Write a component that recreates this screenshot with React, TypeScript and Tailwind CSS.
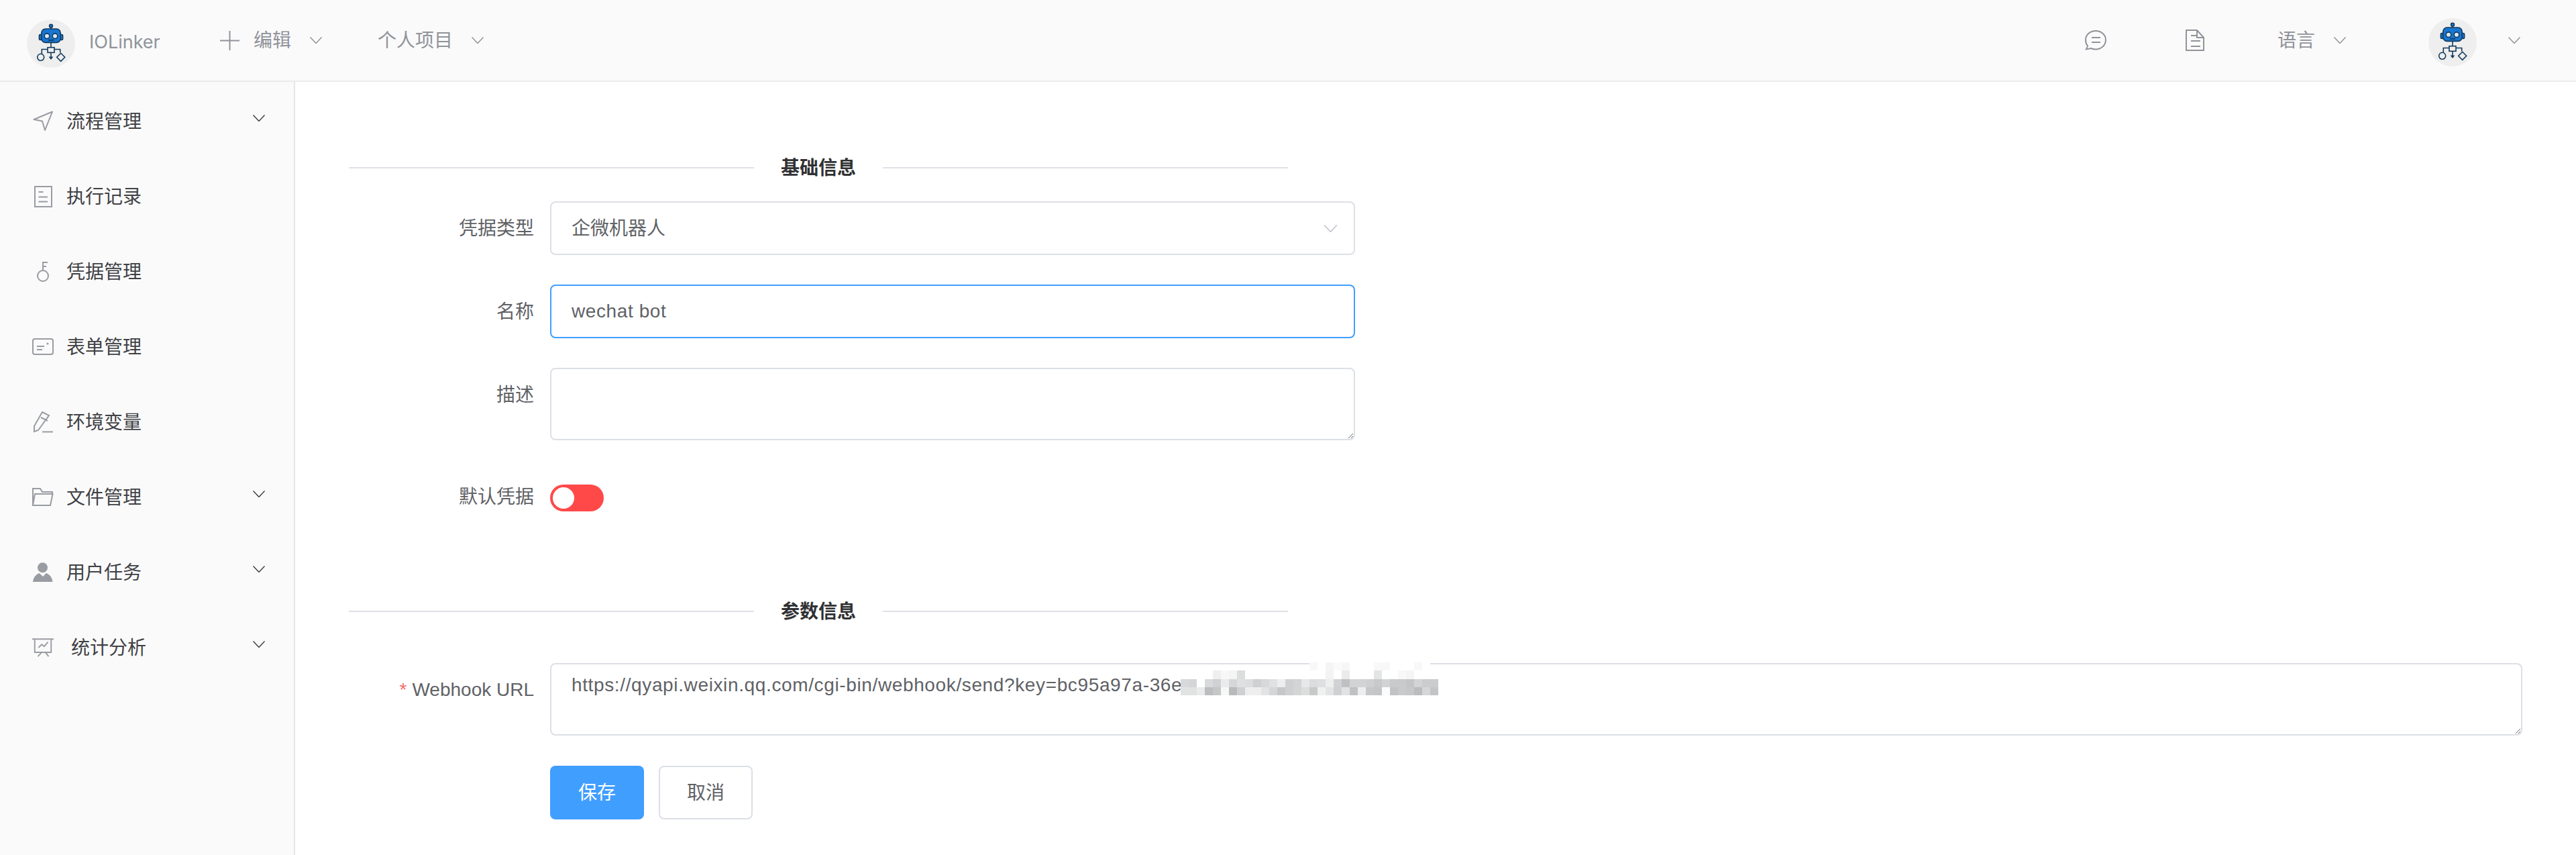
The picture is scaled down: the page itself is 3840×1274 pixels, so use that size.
import type { ReactNode } from 'react';

const fontStack = "[font-family:'Inter','Noto_Sans_CJK_SC',sans-serif]";
// latin values in the fields run a little narrower than Inter
const latinFont = "[font-family:'Liberation_Sans','Noto_Sans_CJK_SC',sans-serif]";

function Chevron({ className = 'text-[#9a9ca3]' }: { className?: string }) {
  return (
    <svg width="18" height="10" viewBox="0 0 18 10" fill="none" stroke="currentColor" strokeWidth="1.5" className={className}>
      <path d="M0.5 0.5L9 9.5L17.5 0.5" />
    </svg>
  );
}

function RobotLogo() {
  return (
    <svg width="72" height="72" viewBox="0 0 72 72" className="shrink-0">
      <circle cx="36" cy="36" r="36" fill="#eeeeee" />
      <g stroke="#123a5c" strokeWidth="1.6" fill="none">
        <circle cx="36" cy="9.7" r="2.4" fill="#1f78d1" />
        <path d="M36 12v2" />
        <rect x="18.4" y="22.5" width="4" height="8" rx="1.5" fill="#1f78d1" />
        <rect x="49.6" y="22.5" width="4" height="8" rx="1.5" fill="#1f78d1" />
        <rect x="21.8" y="14" width="28.4" height="20.4" rx="6" fill="#1976d2" />
        <circle cx="30" cy="24.7" r="3.8" fill="#dbe9f5" />
        <circle cx="42" cy="24.7" r="3.8" fill="#dbe9f5" />
        <path d="M32 30.8h8" strokeWidth="1.8" />
        <path d="M36 34.4v7.3" />
        <rect x="31" y="41.7" width="10" height="7.6" fill="#eeeeee" />
        <path d="M31 44.5h-8.7v6.5M41 44.5h8.7v5" />
        <circle cx="20.7" cy="56.3" r="5" />
        <path d="M50.7 50.3l6 6-6 6-6-6z" />
        <path d="M36 49.3v8" />
      </g>
      <path d="M32.6 55.5h6.8L36 60z" fill="#123a5c" />
    </svg>
  );
}

const iconStroke = { fill: 'none', stroke: '#9a9ca3', strokeWidth: 2 };

const icons: Record<string, ReactNode> = {
  flow: (
    <svg width="32" height="32" viewBox="0 0 32 32" {...iconStroke}>
      <path d="M30 1.5L2.5 13L15 15.5L19 29z" strokeLinejoin="round" />
    </svg>
  ),
  record: (
    <svg width="32" height="32" viewBox="0 0 32 32" {...iconStroke}>
      <rect x="4" y="1" width="25" height="30" />
      <path d="M9.5 9h7M9.5 16.5h13.5M9.5 23.5h13.5" />
    </svg>
  ),
  key: (
    <svg width="32" height="32" viewBox="0 0 32 32" {...iconStroke}>
      <circle cx="16" cy="22" r="8" />
      <path d="M16 14V1M16 2h7M16 8h5" />
    </svg>
  ),
  card: (
    <svg width="32" height="32" viewBox="0 0 32 32" {...iconStroke}>
      <rect x="1" y="4" width="30" height="23" rx="3" />
      <path d="M7 15h11M7 20h8" />
      <circle cx="23" cy="11" r="1.6" fill="#9a9ca3" stroke="none" />
    </svg>
  ),
  pencil: (
    <svg width="32" height="32" viewBox="0 0 32 32" {...iconStroke}>
      <path d="M15 1L25 6L9 28L3 30V22z" />
      <path d="M13 9l10 5M15 30.5h16" />
    </svg>
  ),
  folder: (
    <svg width="32" height="32" viewBox="0 0 32 32" {...iconStroke}>
      <path d="M1 28V3h11l3 5h15v3" />
      <path d="M4 11h26.5l-3.5 17H1z" />
    </svg>
  ),
  user: (
    <svg width="32" height="32" viewBox="0 0 32 32" fill="#9a9ca3">
      <circle cx="15.5" cy="8.7" r="7.5" />
      <path d="M1 30c1-8 5-11 9.500-13l5.500 5l5-5c4.500 2 8.500 5 9.500 13z" />
    </svg>
  ),
  board: (
    <svg width="34" height="30" viewBox="0 0 34 30" {...iconStroke}>
      <path d="M0 1.500h34M4 1.500v21h26v-21M15 22.500L9 29M21 22.500L26 29" />
      <path d="M10 15l5-5l4 3l6-7" />
    </svg>
  ),
};

const menus = [
  { icon: 'flow', label: '流程管理', arrow: true },
  { icon: 'record', label: '执行记录' },
  { icon: 'key', label: '凭据管理' },
  { icon: 'card', label: '表单管理' },
  { icon: 'pencil', label: '环境变量' },
  { icon: 'folder', label: '文件管理', arrow: true },
  { icon: 'user', label: '用户任务', arrow: true },
  { icon: 'board', label: '统计分析', arrow: true },
];

function Header() {
  return (
    <header className="h-[122px] shrink-0 flex items-center bg-[#fafafa] border-b-2 border-[#ebebeb] text-[28px] text-[#90939a]">
      <div className="ml-[40px] mt-[9px]"><RobotLogo /></div>
      <span className="ml-[21px] text-[27px] mt-[6px] w-[107px]">IOLinker</span>
      <svg width="29" height="29" viewBox="0 0 29 29" stroke="#90939a" strokeWidth="2" className="ml-[88px]">
        <path d="M0 14.500h29M14.500 0v29" />
      </svg>
      <span className="ml-[21px]">编辑</span>
      <Chevron className="ml-[28px] text-[#90939a]" />
      <span className="ml-[83px]">个人项目</span>
      <Chevron className="ml-[28px] text-[#90939a]" />

      <div className="ml-auto flex items-center">
        <svg width="32" height="30" viewBox="0 0 32 30" fill="none" stroke="#90939a" strokeWidth="2">
          <path d="M16 1c8 0 15 5.500 15 13.500S24 28.500 16 28.500c-3 0-5-.5-7-1.500l-7 1.500l2-5C2 21 1 18 1 14.500C1 6.500 8 1 16 1z" />
          <path d="M10 11h13M10 18h13" />
        </svg>
        <svg width="28" height="32" viewBox="0 0 28 32" fill="none" stroke="#90939a" strokeWidth="2" className="ml-[118px]">
          <path d="M1 1h16l10 11v19H1z" />
          <path d="M17 1v11h10M8 9h8M8 17h14M8 25h14" />
        </svg>
        <span className="ml-[109px]">语言</span>
        <Chevron className="ml-[28px] text-[#90939a]" />
        <div className="ml-[123px] mt-[6px]"><RobotLogo /></div>
        <Chevron className="ml-[47px] mr-[83px] text-[#90939a]" />
      </div>
    </header>
  );
}

function Sidebar() {
  return (
    <aside className="w-[440px] shrink-0 bg-[#fafafa] border-r-2 border-[#e2e5ea] pt-[3px]">
      {menus.map((m) => (
        <div key={m.label} className="h-[112px] flex items-center pl-[48px] pr-[43px] text-[28px] text-[#3f4145]">
          <span className="w-[32px] flex justify-center">{icons[m.icon]}</span>
          <span className={m.icon === 'board' ? 'ml-[26px]' : 'ml-[19px]'}>{m.label}</span>
          {m.arrow && <Chevron className="ml-auto mb-[10px]" />}
        </div>
      ))}
    </aside>
  );
}

function SectionTitle({ children }: { children: ReactNode }) {
  return (
    <div className="w-[1400px] h-[40px] flex items-center gap-[40px]">
      <div className="flex-1 h-[2px] bg-[#dfe1e6]" />
      <span className="text-[28px] font-bold text-[#303133]">{children}</span>
      <div className="flex-1 h-[2px] bg-[#dfe1e6]" />
    </div>
  );
}

function FormRow({ label, required, children, className = '' }: { label: string; required?: boolean; children: ReactNode; className?: string }) {
  return (
    <div className={`flex gap-[24px] ${className}`}>
      <label className={`w-[276px] shrink-0 text-right text-[28px] leading-[80px] text-[#606266] whitespace-nowrap ${required ? latinFont : ''}`}>
        {required && <span className="text-[#f56c6c] mr-[8px]">*</span>}
        {label}
      </label>
      {children}
    </div>
  );
}

const mosaic: [number, number, string[]][] = [
  [987, 16, ['#f8f8f9', '#ffffff', '#f5f5f6', '#fafafa', '#f6f6f7', '#ffffff', '#ffffff', '#ffffff', '#f8f8f9', '#f8f8f9', '#ffffff', '#ffffff', '#ffffff', '#f8f8f9', '#ffffff']],
  [999, 4, ['#efefef', '#f7f7f7', '#f4f4f4', '#dcdddd', '#ffffff', '#ffffff', '#ffffff', '#ffffff', '#ffffff', '#ffffff', '#ffffff', '#ffffff', '#ffffff', '#ffffff', '#f3f3f4', '#ffffff', '#ebebec', '#ffffff', '#ffffff', '#ffffff', '#e3e4e4', '#ffffff', '#ffffff', '#f8f8f8', '#f5f5f5']],
  [1012, 0, ['#d8d9da', '#d4d5d7', '#ffffff', '#d8d9da', '#d0d1d3', '#ebebec', '#d6d7d8', '#dfe0e1', '#dcdddf', '#cfd0d2', '#d7d8d9', '#e0e1e2', '#eeeeef', '#cfd0d1', '#d3d4d5', '#e8e8e9', '#dbdcdd', '#dfe0e1', '#eeeeef', '#d1d2d3', '#bfc0c2', '#d2d3d4', '#d2d3d4', '#cfd0d1', '#c8c9ca', '#d2d3d4', '#c9cacb', '#c9cacb', '#c4c5c6', '#d3d4d5', '#cbcccd', '#cbcccd']],
  [1024, 0, ['#e1e2e2', '#e1e2e2', '#ebebec', '#bcbdbe', '#c5c6c7', '#f7f7f7', '#b9babb', '#cfd0d1', '#eeeeef', '#eeeeef', '#e2e4e3', '#d5d6d7', '#c6c7c8', '#cfd0d1', '#d4d5d6', '#dcdddd', '#c8c9ca', '#f0f0f0', '#e3e5e4', '#cfd0d1', '#e1e2e3', '#c0c1c2', '#eeeeef', '#c6c7c8', '#c4c5c6', '#fcfcfc', '#c2c3c4', '#c9cacb', '#c6c7c8', '#bbbcbd', '#d5d6d7', '#c3c4c5']],
];

function Mosaic() {
  // blurred part of the key, sits on top of the textarea
  return (
    <svg width="384" height="50" viewBox="1760 987 384 50" className="absolute left-[1240px] top-[-1px] pointer-events-none">
      {mosaic.map(([y, start, colors]) =>
        colors.map((c, i) => (
          <rect key={`${y}-${i}`} x={1760 + (start + i) * 12} y={y} width="12" height={y === 999 ? 13 : 12} fill={c} />
        ))
      )}
    </svg>
  );
}

const fieldBase = 'w-[1200px] rounded-[8px] border-2 bg-white text-[28px] text-[#606266] outline-none';

export default function App() {
  return (
    <div className={`w-[3840px] h-[1274px] flex flex-col bg-white overflow-hidden ${fontStack}`}>
      <Header />
      <div className="flex flex-1 min-h-0">
        <Sidebar />
        <main className="flex-1 pl-[80px] pr-[80px] pt-[108px]">
          <SectionTitle>基础信息</SectionTitle>

          <FormRow label="凭据类型" className="mt-[30px]">
            <div className={`${fieldBase} h-[80px] border-[#dcdfe6] flex items-center justify-between pl-[30px] pr-[24px]`}>
              <span>企微机器人</span>
              <Chevron className="w-[21px] h-[11px] text-[#c0c4cc]" />
            </div>
          </FormRow>
          <FormRow label="名称" className="mt-[44px]">
            <input defaultValue="wechat bot" className={`${fieldBase} h-[80px] border-[#409eff] px-[30px] tracking-[0.6px] ${latinFont}`} />
          </FormRow>
          <FormRow label="描述" className="mt-[44px]">
            <textarea className={`${fieldBase} h-[108px] border-[#dcdfe6] block px-[30px] py-[10px] leading-[1.5]`} />
          </FormRow>
          <FormRow label="默认凭据" className="mt-[44px]">
            <div className="h-[80px] flex items-center">
              <div className="w-[80px] h-[40px] mt-[4px] rounded-full bg-[#ff4949] p-[4px] flex">
                <div className="w-[32px] h-[32px] rounded-full bg-white" />
              </div>
            </div>
          </FormRow>

          <div className="mt-[111px]">
            <SectionTitle>参数信息</SectionTitle>
          </div>

          <FormRow label="Webhook URL" required className="mt-[57px] relative">
            <textarea
              defaultValue="https://qyapi.weixin.qq.com/cgi-bin/webhook/send?key=bc95a97a-36e"
              className={`w-full h-[108px] rounded-[8px] border-2 border-[#dcdfe6] bg-white text-[28px] text-[#606266] outline-none block px-[30px] py-[10px] leading-[1.5] tracking-[0.63px] ${latinFont}`}
            />
            <Mosaic />
          </FormRow>

          <div className="ml-[300px] mt-[45px] flex gap-[22px]">
            <button className="w-[140px] h-[80px] rounded-[8px] bg-[#409eff] text-white text-[28px]">保存</button>
            <button className="w-[140px] h-[80px] rounded-[8px] border-2 border-[#dcdfe6] bg-white text-[#606266] text-[28px]">取消</button>
          </div>
        </main>
      </div>
    </div>
  );
}
